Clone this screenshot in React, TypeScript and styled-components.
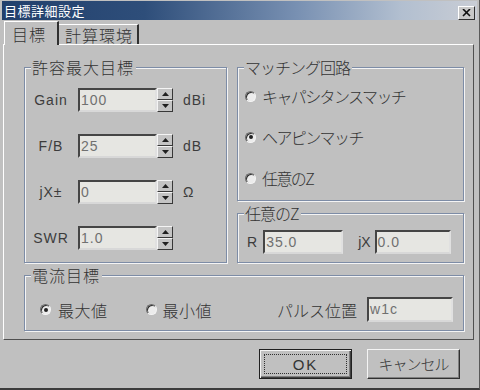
import React from 'react';
import styled, { createGlobalStyle } from 'styled-components';

const JP = `"Noto Sans CJK JP", sans-serif`;
const MIX = `"Liberation Sans", "Noto Sans CJK JP", sans-serif`;

const GlobalStyle = createGlobalStyle`
  html, body { margin: 0; padding: 0; background: #c0c0c0; }
  * { box-sizing: border-box; }
`;

const Window = styled.div`
  width: 480px;
  height: 390px;
  background: #c0c0c0;
  display: flex;
  flex-direction: column;
  padding: 1px 2px 0 2px;
  border-bottom: 2px solid #3c3c3c;
  border-right: 1px solid #5a5a5a;
  font-family: ${MIX};
  color: #333;
`;

const TitleBar = styled.div`
  height: 19px;
  display: flex;
  align-items: center;
  justify-content: space-between;
  padding: 0 2px 0 2px;
  background: linear-gradient(to right, #22406c 0%, #2e4e7a 30%, #7890b2 62%, #b2bfd0 84%, #c9cdd5 100%);
`;

const TitleText = styled.span`
  font-family: ${JP};
  font-size: 13px;
  line-height: 15px;
  color: #fff;
  letter-spacing: 0.5px;
`;

const CloseBtn = styled.div`
  width: 17px;
  height: 14px;
  background: #c8c8c8;
  border: 1px solid;
  border-color: #fff #303030 #303030 #fff;
  display: flex;
  align-items: center;
  justify-content: center;
  margin-top: 4px;
`;

const TabStrip = styled.div`
  height: 24px;
  display: flex;
  align-items: flex-end;
  padding-left: 2px;
`;

const Tab = styled.div<{ $active?: boolean }>`
  font-family: ${JP};
  font-weight: 300;
  font-size: 16px;
  line-height: 18px;
  letter-spacing: 1px;
  height: ${p => (p.$active ? '24px' : '20px')};
  padding: ${p => (p.$active ? '3px 10px 0 7px' : '1px 0 0 6px')};
  width: ${p => (p.$active ? '55px' : '80px')};
  border-top: 1px solid #fff;
  border-left: ${p => (p.$active ? '1px solid #fff' : 'none')};
  border-right: 2px solid #303030;
  background: #c0c0c0;
  margin-bottom: ${p => (p.$active ? '-1px' : '0')};
  position: relative;
  z-index: ${p => (p.$active ? 1 : 0)};
`;

const Panel = styled.div`
  width: 471px;
  height: 296px;
  margin-left: 1px;
  border: 1px solid;
  border-color: #fff #505050 #505050 #fff;
  padding: 22px 0 0 20px;
  display: flex;
  flex-direction: column;
  gap: 12px;
`;

const TopRow = styled.div`
  display: flex;
  gap: 10px;
`;

const Column = styled.div`
  display: flex;
  flex-direction: column;
  gap: 12px;
`;

const Group = styled.div<{ $w: number; $h: number }>`
  width: ${p => p.$w}px;
  height: ${p => p.$h}px;
  border: 1px solid #7d8ca6;
  box-shadow: inset 1px 1px 0 #f4f4f4, 1px 1px 0 #f4f4f4;
  display: flex;
  flex-direction: column;
`;

const Legend = styled.div<{ $ls?: number }>`
  font-family: ${JP};
  font-weight: 300;
  font-size: 16px;
  line-height: 16px;
  height: 16px;
  letter-spacing: ${p => p.$ls ?? 0}px;
  margin: -9px 0 -7px 6px;
  padding: 0 2px 0 1px;
  background: #c0c0c0;
  align-self: flex-start;
`;

const FieldList = styled.div`
  display: flex;
  flex-direction: column;
  gap: 22px;
  padding: 20px 0 0 3px;
`;

const FieldRow = styled.div`
  display: flex;
  align-items: center;
  height: 24px;
`;

const FieldLabel = styled.span`
  width: 46px;
  margin-right: 4px;
  text-align: center;
  font-size: 14px;
  letter-spacing: 1px;
  color: #3c3c3c;
`;

const Input = styled.div<{ $w: number }>`
  width: ${p => p.$w}px;
  height: 24px;
  background: #e6e6e2;
  border: 2px solid;
  border-color: #454545 #e0e0e0 #d8d8d8 #454545;
  font-family: ${MIX};
  font-size: 14px;
  line-height: 20px;
  letter-spacing: 1px;
  color: #707070;
  padding-left: 1px;
`;

const Spin = styled.div`
  width: 16px;
  height: 24px;
  display: flex;
  flex-direction: column;
`;

const SpinBtn = styled.div`
  flex: 1;
  background: #c4c4c4;
  border: 1px solid;
  border-color: #f4f4f4 #383838 #383838 #f4f4f4;
  display: flex;
  align-items: center;
  justify-content: center;
`;

const Unit = styled.span`
  margin-left: 10px;
  font-size: 14px;
  letter-spacing: 1px;
  color: #3c3c3c;
`;

const RadioList = styled.div`
  display: flex;
  flex-direction: column;
  gap: 21px;
  padding: 18px 0 0 7px;
`;

const RadioRow = styled.div<{ $gap?: number }>`
  display: flex;
  align-items: center;
  height: 20px;
  gap: ${p => p.$gap ?? 6}px;
`;

const RadioDot = styled.span<{ $checked?: boolean }>`
  width: 11px;
  height: 11px;
  border-radius: 50%;
  background: #ececec;
  border: 1px solid;
  border-color: #6a6a6a #f4f4f4 #f4f4f4 #6a6a6a;
  box-shadow: inset 1px 1px 0 #303030;
  display: flex;
  align-items: center;
  justify-content: center;
  &::after {
    content: '';
    width: 4px;
    height: 4px;
    border-radius: 50%;
    background: ${p => (p.$checked ? '#222' : 'transparent')};
  }
`;

const JpText = styled.span<{ $ls?: number }>`
  font-family: ${JP};
  font-weight: 300;
  font-size: 16px;
  line-height: 18px;
  letter-spacing: ${p => p.$ls ?? 0}px;
  white-space: nowrap;
`;

const ZRow = styled.div`
  display: flex;
  align-items: center;
  padding: 16px 0 0 9px;
`;

const SmallLabel = styled.span<{ $ml: number; $mr: number }>`
  font-size: 14px;
  color: #3c3c3c;
  margin-left: ${p => p.$ml}px;
  margin-right: ${p => p.$mr}px;
`;

const CurrentRow = styled.div`
  display: flex;
  align-items: center;
  padding: 21px 0 0 15px;
  height: 46px;
`;

const Footer = styled.div`
  display: flex;
  justify-content: flex-end;
  gap: 15px;
  padding: 9px 17px 0 0;
`;

const Button = styled.div<{ $default?: boolean }>`
  width: 93px;
  height: 30px;
  background: #c0c0c0;
  border: 1px solid;
  border-color: ${p => (p.$default ? '#202020' : '#f4f4f4 #303030 #303030 #f4f4f4')};
  box-shadow: ${p =>
    p.$default
      ? 'inset 1px 1px 0 #f4f4f4, inset -1px -1px 0 #404040, inset -2px -2px 0 #808080'
      : 'inset -1px -1px 0 #808080'};
  display: flex;
  align-items: center;
  justify-content: center;
  padding: 4px;
`;

const FocusRing = styled.div<{ $show?: boolean }>`
  width: 100%;
  height: 100%;
  border: 1px dotted ${p => (p.$show ? '#303030' : 'transparent')};
  display: flex;
  align-items: center;
  justify-content: center;
  font-family: ${MIX};
  font-size: 15px;
  letter-spacing: 2px;
`;

const Arrow = ({ up }: { up?: boolean }) => (
  <svg width="7" height="4" viewBox="0 0 7 4">
    <path d={up ? 'M0 4 L3.5 0 L7 4 Z' : 'M0 0 L3.5 4 L7 0 Z'} fill="#202020" />
  </svg>
);

const Spinner = () => (
  <Spin>
    <SpinBtn><Arrow up /></SpinBtn>
    <SpinBtn><Arrow /></SpinBtn>
  </Spin>
);

const targets = [
  { label: 'Gain', value: '100', unit: 'dBi' },
  { label: 'F/B', value: '25', unit: 'dB' },
  { label: 'jX±', value: '0', unit: 'Ω' },
  { label: 'SWR', value: '1.0', unit: '' },
];

const matching = [
  { label: 'キャパシタンスマッチ', checked: false },
  { label: 'ヘアピンマッチ', checked: true },
  { label: '任意のZ', checked: false },
];

export default function App() {
  return (
    <Window>
      <GlobalStyle />
      <TitleBar>
        <TitleText>目標詳細設定</TitleText>
        <CloseBtn>
          <svg width="9" height="8" viewBox="0 0 9 8">
            <path d="M1 0 L8 7 M8 0 L1 7" stroke="#101010" strokeWidth="1.6" />
          </svg>
        </CloseBtn>
      </TitleBar>
      <TabStrip>
        <Tab $active>目標</Tab>
        <Tab>計算環境</Tab>
      </TabStrip>
      <Panel>
        <TopRow>
          <Group $w={203} $h={196}>
            <Legend $ls={1}>許容最大目標</Legend>
            <FieldList>
              {targets.map(t => (
                <FieldRow key={t.label}>
                  <FieldLabel>{t.label}</FieldLabel>
                  <Input $w={79}>{t.value}</Input>
                  <Spinner />
                  {t.unit && <Unit>{t.unit}</Unit>}
                </FieldRow>
              ))}
            </FieldList>
          </Group>
          <Column>
            <Group $w={227} $h={134}>
              <Legend $ls={-1}>マッチング回路</Legend>
              <RadioList>
                {matching.map(m => (
                  <RadioRow key={m.label}>
                    <RadioDot $checked={m.checked} />
                    <JpText $ls={-1.6}>{m.label}</JpText>
                  </RadioRow>
                ))}
              </RadioList>
            </Group>
            <Group $w={227} $h={50}>
              <Legend $ls={-1}>任意のZ</Legend>
              <ZRow>
                <SmallLabel $ml={0} $mr={6}>R</SmallLabel>
                <Input $w={80}>35.0</Input>
                <SmallLabel $ml={15} $mr={4}>jX</SmallLabel>
                <Input $w={76}>0.0</Input>
              </ZRow>
            </Group>
          </Column>
        </TopRow>
        <Group $w={440} $h={56}>
          <Legend $ls={1}>電流目標</Legend>
          <CurrentRow>
            <RadioRow $gap={7}>
              <RadioDot $checked />
              <JpText $ls={0.5}>最大値</JpText>
            </RadioRow>
            <RadioRow $gap={6} style={{ marginLeft: 38 }}>
              <RadioDot />
              <JpText $ls={0.5}>最小値</JpText>
            </RadioRow>
            <JpText $ls={0} style={{ marginLeft: 65, marginRight: 10 }}>パルス位置</JpText>
            <Input $w={86} style={{ height: 25 }}>w1c</Input>
          </CurrentRow>
        </Group>
      </Panel>
      <Footer>
        <Button $default>
          <FocusRing $show>OK</FocusRing>
        </Button>
        <Button>
          <FocusRing>
            <JpText $ls={-1} style={{ fontSize: 15 }}>キャンセル</JpText>
          </FocusRing>
        </Button>
      </Footer>
    </Window>
  );
}
